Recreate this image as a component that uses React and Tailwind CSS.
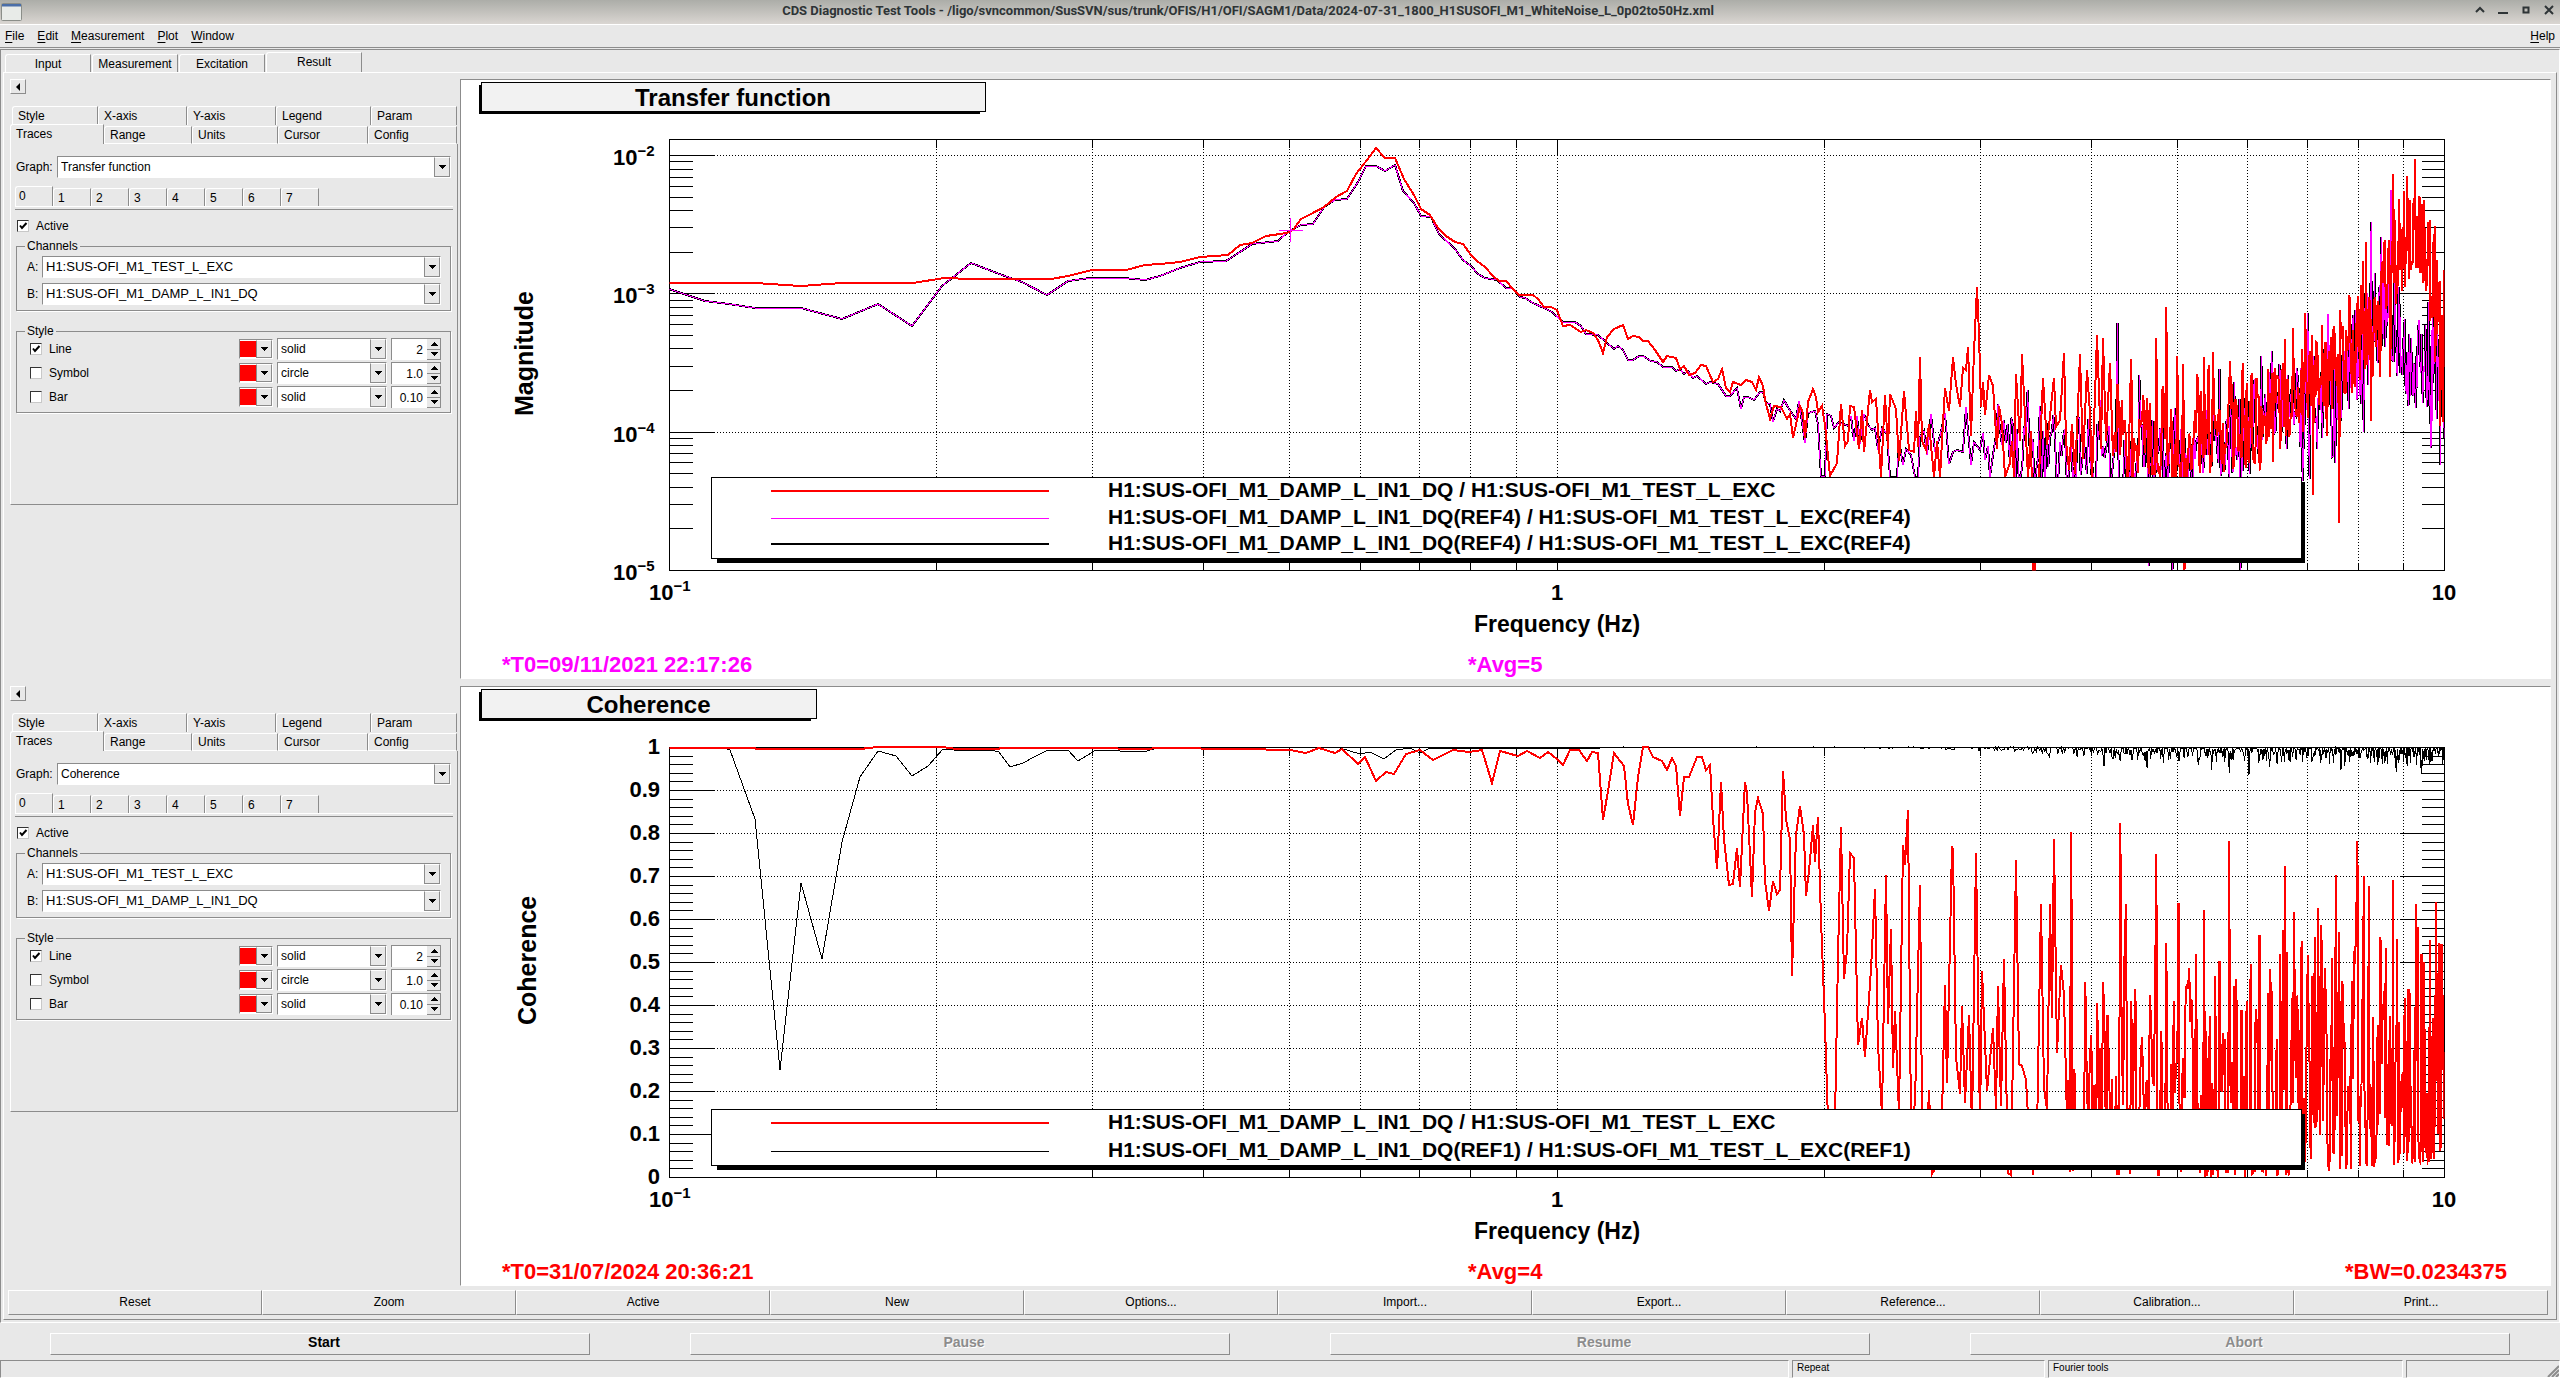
import React from 'react'
import { useState } from 'react';

// plot geometry, in canvas units
const LEFT = 669.5;
const DECADE = 887.5;
const RIGHT = LEFT + DECADE * 2;

const freqX = (f) => LEFT + DECADE * Math.log10(f / 0.1);

const parse = (s) => s.trim().split(/\s+/).map((p) => p.split(',').map(Number));

const random = (seed) => () => {
  seed = (seed + 0x6d2b79f5) | 0;
  let t = Math.imul(seed ^ (seed >>> 15), 1 | seed);
  t = (t + Math.imul(t ^ (t >>> 7), 61 | t)) ^ t;
  return ((t ^ (t >>> 14)) >>> 0) / 4294967296;
};

// fills the noisy end of a trace bin by bin, between a top and a bottom level
const noise = (from, bins, levels, shape, peaks, seed) => {
  const rnd = random(seed);
  const env = parse(levels.replace(/\//g, ','));
  const out = [];
  for (let k = 1; k <= 10 * bins; k++) {
    const x = freqX(k / bins);
    if (x <= from) continue;
    let i = env.findIndex((e) => e[0] >= x);
    if (i < 0) i = env.length - 1;
    const b = env[i];
    const a = env[Math.max(0, i - 1)];
    const t = b[0] === a[0] ? 0 : Math.min(1, (x - a[0]) / (b[0] - a[0]));
    const top = a[1] + (b[1] - a[1]) * t;
    const bottom = a[2] + (b[2] - a[2]) * t;
    out.push([x, top + (bottom - top) * shape(rnd)]);
  }
  parse(peaks).forEach(([px, py]) => {
    let best = 0;
    out.forEach((p, i) => {
      if (Math.abs(p[0] - px) < Math.abs(out[best][0] - px)) best = i;
    });
    out[best] = [out[best][0], py];
  });
  return out;
};

const points = (list) => list.map((p) => p[0].toFixed(1) + ',' + p[1].toFixed(1)).join(' ');

const wide = (r) => r() + (r() < 0.1 ? r() * 0.5 : 0);
const low = (r) => 1 - Math.pow(r(), 1.9);
const high = (r) => Math.pow(r(), 2.6);

const transferRed = points([
  ...parse(`669,283 755,283 801,286 842,283 913,283 944,278 971,279 1051,279 1068,276 1092,270 1126,270 1145,265 1160,264 1180,262
  1200,257 1228,255 1240,245 1252,243 1266,236 1287,233 1293,230 1301,219 1311,214 1324,207 1336,197 1347,191 1356,174 1367,160
  1376,148 1385,158 1395,158 1404,179 1414,195 1421,209 1430,215 1438,228 1446,236 1455,242 1463,244 1471,255 1477,261 1485,267
  1493,276 1499,281 1506,281 1513,289 1519,295 1533,295 1538,299 1544,307 1551,307 1557,310 1563,326 1570,325 1581,332 1586,330
  1593,333 1598,340 1603,353 1607,337 1614,329 1623,325 1628,339 1633,336 1639,337 1643,341 1648,341 1655,350 1663,362 1667,356
  1676,358 1680,369 1684,366 1689,375 1695,373 1701,365 1706,366 1713,382 1718,379 1722,369 1726,388 1730,392 1733,382 1741,385
  1746,380 1752,382 1756,390 1759,377 1763,386 1765,400 1770,419 1774,406 1781,407 1787,419 1790,414 1793,438 1797,420 1800,406
  1803,413 1805,438 1808,402 1813,389 1816,397 1818,412 1822,406 1825,425 1830,476 1837,463 1841,404 1845,446 1848,441 1850,406
  1854,407 1859,449 1862,410 1864,452 1870,390 1872,402 1876,399 1881,477 1885,395 1888,449 1890,394 1896,409 1899,461 1904,391
  1909,450 1914,452 1916,411 1918,447 1920,357 1922,441 1926,450 1929,424 1934,477 1937,441 1940,477 1945,388 1949,411 1953,357
  1956,384 1960,407 1963,368 1966,370 1968,347 1971,436 1974,352 1977,287 1979,334 1981,407 1983,382 1985,415 1989,375 1993,386
  1997,449 1999,406 2002,424 2005,477 2010,463 2012,441 2014,477 2016,374 2020,441 2022,354 2025,416 2028,477 2031,431 2033,570
  2035,570 2039,477 2043,378 2047,445 2051,406 2054,378 2056,427 2060,420 2064,353 2066,441 2069,470 2072,424 2075,474 2078,406
  2080,354 2083,459 2087,370 2090,413 2092,477 2095,395 2097,335 2101,449 2103,338 2106,441 2110,363 2113,456`),
  ...noise(2114, 64, '2114/385/480 2200/385/485 2240/375/475 2270/365/465 2290/350/450 2310/335/430 2340/325/400 2360/285/390 2375/260/350 2390/220/320 2405/195/290 2418/190/270 2430/220/320 2438/250/370 2445/290/430', wide,
    `2117,384 2131,359 2143,395 2156,338 2166,307 2177,356 2183,364 2185,570 2197,374 2204,357 2209,365 2213,352 2230,361 2243,363 2252,373
    2285,339 2293,328 2305,313 2313,495 2322,325 2339,523 2340,310 2349,295 2363,261 2366,242 2371,421 2380,377 2390,377 2393,174
    2399,199 2404,191 2407,176 2415,159 2424,200 2435,226 2440,426 2443,422 2444,270`, 7),
]);

const transferRef = points([
  ...parse(`669,289 705,301 729,304 755,308 801,308 842,319 878,304 912,326 942,286 971,263 1002,275 1022,282 1047,295 1068,281
  1090,278 1124,278 1145,280 1160,276 1180,268 1200,262 1226,261 1240,252 1252,244 1278,241 1289,231 1301,225 1313,224 1324,207
  1335,200 1347,199 1358,182 1366,166 1376,166 1385,171 1395,165 1403,191 1414,203 1421,216 1431,217 1439,234 1455,249 1463,260
  1471,266 1478,274 1485,278 1497,280 1506,288 1512,288 1520,297 1525,298 1533,303 1544,308 1552,312 1563,322 1575,322 1581,326
  1586,334 1598,335 1614,349 1618,346 1623,350 1628,360 1633,360 1639,356 1643,356 1651,361 1657,362 1663,367 1672,367 1676,371
  1680,369 1684,374 1688,371 1693,378 1697,376 1706,384 1710,382 1718,384 1726,396 1730,396 1737,388 1741,409 1744,397 1748,397
  1754,400 1760,392 1763,392 1766,403 1770,404 1773,422 1777,409 1780,411 1784,400 1789,409 1796,419 1799,401 1805,443 1808,413
  1815,411 1818,424 1821,476 1825,476 1827,414 1831,416 1834,428 1839,422 1848,426 1851,416 1854,441 1857,416 1860,444 1864,414
  1868,425 1872,430 1875,428 1878,450 1882,428 1887,434 1890,477 1897,477 1899,440 1903,465 1906,449 1911,455 1915,477 1918,477
  1920,437 1924,431 1927,455 1931,414 1935,452 1940,436 1945,413 1949,464 1953,452 1957,450 1963,452 1966,407 1971,465 1974,442
  1980,450 1983,433 1985,460 1988,446 1990,477 1993,455 1996,435`),
  ...noise(1998, 64, '1998/410/480 2030/410/500 2110/420/510 2170/400/510 2220/390/490 2260/375/460 2300/350/450 2340/335/430 2370/285/400 2385/260/340 2395/270/370 2405/310/400 2430/300/420 2445/320/440', wide,
    `1998,404 2003,420 2027,390 2040,406 2053,415 2100,400 2118,323 2140,375 2148,566 2172,570 2219,369 2234,382 2241,570 2261,356 2272,351 2279,364
    2303,481 2308,313 2310,479 2328,314 2332,457 2335,463 2364,432 2371,222 2375,273 2381,237 2391,190 2393,356 2408,399 2415,397
    2422,384 2428,394 2440,465`, 21),
]);

const coherenceRed = points([
  ...parse(`669,748 755,748 756,749 860,749 878,747 942,747 957,749 999,749 1000,748 1117,748 1119,749 1144,749 1160,748 1240,749
  1290,750 1306,753 1319,748 1335,753 1342,749 1358,764 1365,757 1376,781 1386,772 1394,774 1406,754 1420,750 1433,760 1453,750
  1469,752 1482,750 1492,783 1500,751 1518,756 1527,751 1540,758 1548,752 1557,759 1563,765 1570,750 1579,750 1587,761 1592,752
  1598,753 1603,820 1608,791 1614,753 1624,766 1628,804 1633,825 1638,777 1643,747 1648,747 1653,757 1662,761 1667,770 1672,758
  1676,766 1680,816 1684,777 1689,777 1697,757 1702,757 1706,770 1710,765 1713,819 1717,869 1721,782 1724,839 1729,885 1733,884
  1737,848 1740,887 1745,782 1747,793 1752,897 1755,812 1758,798 1763,814 1765,881 1769,911 1773,881 1777,894 1780,890 1783,771
  1786,819 1790,839 1792,976 1796,835 1800,806 1804,835 1806,896 1809,871 1813,825 1815,862 1818,817 1821,919 1825,1026 1828,1120
  1835,1120 1838,957 1841,827 1844,979 1847,950 1850,853 1854,858 1858,1045 1862,1018 1865,1057 1871,969 1875,889 1878,1045
  1882,1114 1886,875 1888,1024 1891,929 1893,1068 1895,1011 1899,1114 1903,845 1905,865 1908,810 1911,1126 1915,1103 1920,885
  1922,1110 1927,1141 1929,1090 1932,1174 1941,1160 1945,985 1947,1083 1952,846 1953,850 1956,1057 1960,1094 1962,1006 1965,1103
  1969,1015 1972,1126 1976,853 1980,1126 1982,971 1987,1091 1993,1028 1996,1110 1998,986 2001,1106 2004,959 2008,1173 2011,1175
  2016,860 2019,1064 2022,1066 2026,1080 2029,1133 2033,1175 2037,1133 2041,904 2044,1087 2047,1110 2050,904 2052,1018 2054,839
  2057,1053 2061,965 2064,995 2067,1120`),
  ...noise(2068, 64, '2068/1000/1172 2200/980/1178 2300/940/1175 2445/930/1160', low,
    `2071,832 2085,982 2098,1003 2103,982 2120,823 2124,956 2126,904 2131,1001 2136,989 2151,1027 2156,854 2166,943 2179,903 2189,968
    2196,954 2204,910 2219,961 2229,841 2242,1010 2247,1001 2259,935 2268,993 2283,930 2285,866 2294,912 2302,941 2308,955 2315,937
    2318,908 2321,925 2336,875 2339,932 2354,951 2357,841 2358,873 2364,876 2369,886 2373,1017 2385,983 2393,880 2397,939 2416,904
    2418,927 2424,962 2430,940 2436,902 2439,943`, 3),
]);

const coherenceRef = points([
  ...parse(`669,748 725,748 730,750 755,819 780,1070 801,883 822,959 842,842 860,777 878,751 896,756 912,776 928,766 943,749 964,751
  991,750 999,752 1010,767 1023,763 1034,757 1046,751 1068,750 1078,761 1096,750 1143,752 1154,749 1240,748 1340,748 1360,754
  1370,752 1384,759 1396,750 1410,748 1420,753 1430,748 1600,748`),
  ...noise(1600, 90, '1600/747/748 1850/747/748 1950/747/750 2060/747/755 2120/748/762 2445/748/766', high,
    '2050,757 2104,766 2147,768 2163,763 2198,765 2212,770 2229,773 2249,775 2270,767 2320,763 2341,770 2345,766 2396,772 2421,774', 11),
]);

const tickFreqs = [0.2, 0.3, 0.4, 0.5, 0.6, 0.7, 0.8, 0.9, 1, 2, 3, 4, 5, 6, 7, 8, 9];

const Power = ({ x, y, exp }) => (
  <text x={x} y={y} fontSize="22">10<tspan fontSize="15" dy="-9">−{exp}</tspan></text>
);

const XAxis = ({ top, bottom }) => (
  <>
    {tickFreqs.map((f) => {
      const x = Math.floor(freqX(f)) + 0.5;
      const len = f === 1 ? 16 : 8;
      return (
        <g key={f} stroke="black">
          <line x1={x} x2={x} y1={top} y2={bottom} strokeDasharray="1 2" />
          <line x1={x} x2={x} y1={top} y2={top + len} />
          <line x1={x} x2={x} y1={bottom} y2={bottom - len} />
        </g>
      );
    })}
    <rect x={LEFT} y={top} width={RIGHT - LEFT} height={bottom - top} fill="none" stroke="black" />
    <Power x={649} y={bottom + 29} exp={1} />
    <text x={1557} y={bottom + 29} fontSize="22" textAnchor="middle">1</text>
    <text x={2444} y={bottom + 29} fontSize="22" textAnchor="middle">10</text>
    <text x={1474} y={bottom + 61} fontSize="23">Frequency (Hz)</text>
  </>
);

const YTick = ({ y, major }) => {
  const len = major ? 44 : 23;
  return (
    <g stroke="black">
      <line x1={LEFT} x2={LEFT + len} y1={y} y2={y} />
      <line x1={RIGHT - len} x2={RIGHT} y1={y} y2={y} />
      {major && <line x1={LEFT + len} x2={RIGHT - len} y1={y} y2={y} strokeDasharray="1 2" />}
    </g>
  );
};

const TitleBox = ({ y, width, children }) => (
  <>
    <rect x="479" y={y + 3} width={width - 3} height="29" />
    <rect x="481.5" y={y + 0.5} width={width} height="29" fill="#f2f2f2" stroke="black" />
    <text x={481 + width / 2} y={y + 24} fontSize="24" textAnchor="middle">{children}</text>
  </>
);

const PlotLegend = ({ y, height, items }) => (
  <>
    <rect x="717" y={y + 5} width="1588" height={height} />
    <rect x="711.5" y={y + 0.5} width="1590" height={height} fill="white" stroke="black" />
    {items.map((it) => (
      <g key={it.y}>
        <line x1="771" x2="1049" y1={it.y} y2={it.y} stroke={it.color} strokeWidth={it.width} />
        <text x="1108" y={it.base} fontSize="21">{it.label}</text>
      </g>
    ))}
  </>
);

const Canvas = ({ view, label, children }) => (
  <svg viewBox={view} role="img" aria-label={label} className="block w-full bg-white font-['Liberation_Sans',sans-serif] font-bold" shapeRendering="crispEdges">
    {children}
  </svg>
);

const TransferPlot = () => {
  const top = 139.5;
  const bottom = 570.5;
  const ticks = [];
  for (let d = -5; d < -1; d++) {
    for (let m = 1; m < 10; m++) {
      const y = bottom - 138.3 * (d + 5 + Math.log10(m));
      if (y > top + 2 && y < bottom - 1) ticks.push({ y: Math.floor(y) + 0.5, major: m === 1 });
    }
  }
  return (
    <Canvas view="461 80 2089 598" label="Transfer function">
      <clipPath id="transfer-clip"><rect x={LEFT} y={top} width={RIGHT - LEFT} height={bottom - top} /></clipPath>
      <TitleBox y={82} width={504}>Transfer function</TitleBox>
      {ticks.map((t) => <YTick key={t.y} {...t} />)}
      <XAxis top={top} bottom={bottom} />
      <Power x={613} y={165} exp={2} />
      <Power x={613} y={303} exp={3} />
      <Power x={613} y={442} exp={4} />
      <Power x={613} y={580} exp={5} />
      <text transform="translate(533 416) rotate(-90)" fontSize="25">Magnitude</text>
      <g clipPath="url(#transfer-clip)" fill="none">
        <polyline points={transferRef} stroke="black" strokeWidth="2" />
        <polyline points={transferRef} stroke="#ff00ff" strokeWidth="1" />
        <polyline points={transferRed} stroke="red" strokeWidth="2" />
      </g>
      <path d="M1278.5 230.5h24M1290.5 218v24" stroke="#ff00ff" fill="none" />
      <PlotLegend y={477} height={81} items={[
        { y: 491, base: 497, color: 'red', width: 2, label: 'H1:SUS-OFI_M1_DAMP_L_IN1_DQ / H1:SUS-OFI_M1_TEST_L_EXC' },
        { y: 518.5, base: 524, color: '#ff00ff', width: 1, label: 'H1:SUS-OFI_M1_DAMP_L_IN1_DQ(REF4) / H1:SUS-OFI_M1_TEST_L_EXC(REF4)' },
        { y: 544, base: 550, color: 'black', width: 2, label: 'H1:SUS-OFI_M1_DAMP_L_IN1_DQ(REF4) / H1:SUS-OFI_M1_TEST_L_EXC(REF4)' },
      ]} />
      <g fill="#ff00ff" fontSize="22">
        <text x="502" y="672">*T0=09/11/2021 22:17:26</text>
        <text x="1468" y="672">*Avg=5</text>
      </g>
    </Canvas>
  );
};

const CoherencePlot = () => {
  const top = 747.5;
  const bottom = 1177.5;
  const ticks = [];
  for (let i = 1; i < 50; i++) {
    ticks.push({ y: Math.floor(top + i * 8.6) + 0.5, major: i % 5 === 0 });
  }
  return (
    <Canvas view="461 687 2089 598" label="Coherence">
      <clipPath id="coherence-clip"><rect x={LEFT} y={top - 2} width={RIGHT - LEFT} height={bottom - top + 4} /></clipPath>
      <TitleBox y={689} width={335}>Coherence</TitleBox>
      {ticks.map((t) => <YTick key={t.y} {...t} />)}
      <XAxis top={top} bottom={bottom} />
      {['1', '0.9', '0.8', '0.7', '0.6', '0.5', '0.4', '0.3', '0.2', '0.1', '0'].map((v, i) => (
        <text key={v} x="660" y={754 + i * 43} fontSize="22" textAnchor="end">{v}</text>
      ))}
      <text transform="translate(536 1025) rotate(-90)" fontSize="25">Coherence</text>
      <g clipPath="url(#coherence-clip)" fill="none">
        <polyline points={coherenceRef} stroke="black" strokeWidth="1" />
        <polyline points={coherenceRed} stroke="red" strokeWidth="2" />
      </g>
      <PlotLegend y={1109} height={56} items={[
        { y: 1123, base: 1129, color: 'red', width: 2, label: 'H1:SUS-OFI_M1_DAMP_L_IN1_DQ / H1:SUS-OFI_M1_TEST_L_EXC' },
        { y: 1151.5, base: 1157, color: 'black', width: 1, label: 'H1:SUS-OFI_M1_DAMP_L_IN1_DQ(REF1) / H1:SUS-OFI_M1_TEST_L_EXC(REF1)' },
      ]} />
      <g fill="red" fontSize="22">
        <text x="502" y="1279">*T0=31/07/2024 20:36:21</text>
        <text x="1468" y="1279">*Avg=4</text>
        <text x="2345" y="1279">*BW=0.0234375</text>
      </g>
    </Canvas>
  );
};

const Arrow = ({ up }) => (
  <svg viewBox="0 0 8 4" className="h-1 w-2" shapeRendering="crispEdges" aria-hidden="true">
    <path d={up ? 'M0 4h8L4 0z' : 'M0 0h8L4 4z'} />
  </svg>
);

const ArrowBox = () => (
  <span className="pointer-events-none absolute top-0 right-0 bottom-0 flex w-4 items-center justify-center border border-[#8c8c8c] border-t-white border-l-[#8c8c8c] bg-[#e8e8e8]">
    <Arrow />
  </span>
);

const Select = ({ id, label, value, className, size = 'text-xs' }) => (
  <span className={`relative block border border-[#8c8c8c] border-r-white border-b-white bg-white ${className}`}>
    <select id={id} aria-label={label} defaultValue={value} className={`block h-full w-full appearance-none bg-white pr-4 pl-[3px] outline-none ${size}`}>
      <option>{value}</option>
    </select>
    <ArrowBox />
  </span>
);

const CheckBox = ({ id, label, checked }) => (
  <label htmlFor={id} className="flex items-center gap-[7px]">
    <span className="relative block h-3 w-3">
      <input id={id} type="checkbox" defaultChecked={checked} className="peer block h-3 w-3 appearance-none border border-[#333] border-r-[#c8c8c8] border-b-[#c8c8c8] bg-white" />
      <svg viewBox="0 0 12 12" className="pointer-events-none absolute inset-0 hidden h-3 w-3 peer-checked:block" aria-hidden="true">
        <path d="M3 5.500 5 8 9.500 3" fill="none" stroke="black" strokeWidth="2" />
      </svg>
    </span>
    {label}
  </label>
);

const StyleRow = ({ id, label, checked, kind, amount }) => (
  <div className="flex h-6 items-center">
    <div className="flex-1"><CheckBox id={id} label={label} checked={checked} /></div>
    <button type="button" aria-label={`${label} color`} className="relative h-5 w-[34px] border border-[#8c8c8c] border-r-white border-b-white bg-white">
      <span className="block h-4 w-4 bg-[#ff0000]" />
      <ArrowBox />
    </button>
    <Select label={`${label} type`} value={kind} className="ml-1 h-[22px] w-[110px]" />
    <span className="ml-1 flex h-[22px] w-[50px] border-t border-l border-[#8c8c8c] bg-white">
      <input aria-label={`${label} size`} defaultValue={amount} className="w-[35px] min-w-0 bg-white pr-1 text-right text-xs outline-none" />
      <span className="flex flex-1 flex-col bg-[#e8e8e8]">
        <button type="button" aria-label={`${label} size up`} className="flex flex-1 items-center justify-center border-r border-b border-[#8c8c8c]"><Arrow up /></button>
        <button type="button" aria-label={`${label} size down`} className="flex flex-1 items-center justify-center border-r border-b border-[#8c8c8c]"><Arrow /></button>
      </span>
    </span>
  </div>
);

const tabBase = 'rounded-tl-[3px] border-t border-l border-r border-t-white border-l-white border-r-[#8c8c8c] bg-[#e8e8e8] text-left text-xs leading-4';

const SidePanel = ({ id, graph }) => {
  const [trace, setTrace] = useState(0);
  return (
    <div className="w-[456px] shrink-0 pr-[2px] pl-[6px] text-xs">
      <button type="button" aria-label="Collapse" className="flex h-[15px] w-4 items-center justify-center border border-white border-r-[#8c8c8c] border-b-[#8c8c8c]">
        <svg viewBox="0 0 4 8" className="h-2 w-1" aria-hidden="true"><path d="M4 0v8L0 4z" /></svg>
      </button>
      <div className="mt-3 grid grid-cols-[86fr_89fr_89fr_95fr_86fr] pr-px pl-[2px]">
        {['Style', 'X-axis', 'Y-axis', 'Legend', 'Param'].map((t) => (
          <button key={t} type="button" className={`${tabBase} h-[19px] pl-[5px]`}>{t}</button>
        ))}
      </div>
      <div className="-mt-px grid grid-cols-[94fr_88fr_86fr_90fr_89fr] items-end pr-px">
        {['Traces', 'Range', 'Units', 'Cursor', 'Config'].map((t, i) => (
          <button key={t} type="button" className={`${tabBase} pl-[5px] ${i === 0 ? 'h-5 pb-[2px]' : 'h-[18px] border-b border-b-white'}`}>{t}</button>
        ))}
      </div>
      <div className="h-[361px] border-r border-b border-l border-r-[#8c8c8c] border-b-[#8c8c8c] border-l-white px-[5px] pt-3">
        <div className="flex items-center">
          <label htmlFor={`${id}-graph`} className="w-[41px]">Graph:</label>
          <Select id={`${id}-graph`} value={graph} className="mr-px h-[22px] flex-1" />
        </div>
        <div className="-mx-px mt-2 border-b border-[#8c8c8c] pb-[2px]">
          <div className="flex h-[21px] items-end border-b border-white">
            {[0, 1, 2, 3, 4, 5, 6, 7].map((n) => (
              <button key={n} type="button" onClick={() => setTrace(n)} className={`${tabBase} w-[38px] ${n === trace ? 'h-5 pb-[2px] pl-[3px]' : 'h-[18px] pl-1'}`}>{n}</button>
            ))}
          </div>
        </div>
        <div className="mt-2 h-4 pl-px">
          <CheckBox id={`${id}-active`} label="Active" checked />
        </div>
        <fieldset className="mt-1 mr-px h-[73px] border border-[#8c8c8c] pr-[9px] pl-2 shadow-[1px_1px_0_white]">
          <legend className="px-[2px] leading-4">Channels</legend>
          <div className="mt-[2px] flex items-center pl-[2px]">
            <label htmlFor={`${id}-a`} className="w-[15px]">A:</label>
            <Select id={`${id}-a`} value="H1:SUS-OFI_M1_TEST_L_EXC" size="text-[13px]" className="h-[22px] flex-1" />
          </div>
          <div className="mt-[5px] flex items-center pl-[2px]">
            <label htmlFor={`${id}-b`} className="w-[15px]">B:</label>
            <Select id={`${id}-b`} value="H1:SUS-OFI_M1_DAMP_L_IN1_DQ" size="text-[13px]" className="h-[22px] flex-1" />
          </div>
        </fieldset>
        <fieldset className="mt-3 mr-px h-[90px] border border-[#8c8c8c] pr-[9px] pl-2 shadow-[1px_1px_0_white]">
          <legend className="px-[2px] leading-4">Style</legend>
          <div className="-mt-[2px] pl-[5px]">
            <StyleRow id={`${id}-line`} label="Line" checked kind="solid" amount="2" />
            <StyleRow id={`${id}-symbol`} label="Symbol" kind="circle" amount="1.0" />
            <StyleRow id={`${id}-bar`} label="Bar" kind="solid" amount="0.10" />
          </div>
        </fieldset>
      </div>
    </div>
  );
};

const PlotRow = ({ id, graph, children }) => (
  <div className="flex">
    <SidePanel id={id} graph={graph} />
    <div className="min-w-0 flex-1 border-t border-r border-b border-l border-t-[#8c8c8c] border-r-white border-b-white border-l-[#8c8c8c]">
      {children}
    </div>
  </div>
);

const TitleBar = () => (
  <header className="flex h-6 items-center bg-linear-to-b from-[#acada8] to-[#dad6d2] px-px">
    <svg viewBox="0 0 21 18" className="h-[18px] w-[21px]" aria-hidden="true">
      <rect x="0.500" y="0.500" width="20" height="17" rx="1" fill="#e8ebe8" stroke="#8b8e89" />
      <rect x="1" y="1" width="19" height="2.500" fill="#4a6ea8" />
    </svg>
    <h1 className="flex-1 pb-[3px] text-center font-[Roboto,sans-serif] text-[13px] font-bold text-[#2e3436]">
      CDS Diagnostic Test Tools - /ligo/svncommon/SusSVN/sus/trunk/OFIS/H1/OFI/SAGM1/Data/2024-07-31_1800_H1SUSOFI_M1_WhiteNoise_L_0p02to50Hz.xml
    </h1>
    <div className="flex gap-[11px] pr-1 pb-1">
      {[
        ['Shade', 'M2 8 6 4 10 8'],
        ['Minimize', 'M1 9H11'],
        ['Maximize', 'M3.500 3.500H8.500V8.500H3.500Z'],
        ['Close', 'M2 2 10 10M10 2 2 10'],
      ].map(([name, d]) => (
        <button key={name} type="button" aria-label={name}>
          <svg viewBox="0 0 12 12" className="h-3 w-3" aria-hidden="true"><path d={d} fill="none" stroke="#2e3436" strokeWidth="2" /></svg>
        </button>
      ))}
    </div>
  </header>
);

const MenuItem = ({ name }) => (
  <a href="#" className="leading-4"><span className="underline underline-offset-2">{name[0]}</span>{name.slice(1)}</a>
);

const App = () => {
  return (
    <div className="flex min-h-screen flex-col bg-[#e8e8e8] font-['Liberation_Sans',sans-serif] text-xs text-black">
      <TitleBar />
      <nav className="flex h-6 items-center gap-[13px] border-t border-b border-t-white border-b-[#8c8c8c] px-[5px]">
        {['File', 'Edit', 'Measurement', 'Plot', 'Window'].map((n) => <MenuItem key={n} name={n} />)}
        <span className="flex-1" />
        <MenuItem name="Help" />
      </nav>
      <main className="mt-px border border-t-[#8c8c8c] border-r-white border-b-white border-l-[#8c8c8c] px-[2px] pt-[2px] pb-[2px]">
        <div className="flex h-5 items-end pl-[2px]">
          {['Input', 'Measurement', 'Excitation'].map((n) => (
            <button key={n} type="button" className="mr-px h-[18px] w-[86px] rounded-tl-[3px] border-t border-r border-l border-t-white border-r-[#8c8c8c] border-l-white text-center leading-4">{n}</button>
          ))}
          <button type="button" className="h-5 w-24 rounded-tl-[3px] border-t border-r border-l border-t-white border-r-[#8c8c8c] border-l-white pb-[2px] text-center leading-4">Result</button>
        </div>
        <div className="border border-white border-r-[#8c8c8c] border-b-[#8c8c8c] pt-[6px] pr-[5px] pb-1">
          <div className="flex flex-col gap-[7px]">
            <PlotRow id="top" graph="Transfer function"><TransferPlot /></PlotRow>
            <PlotRow id="bottom" graph="Coherence"><CoherencePlot /></PlotRow>
          </div>
          <div className="mt-1 mr-[3px] ml-1 grid grid-cols-10">
            {['Reset', 'Zoom', 'Active', 'New', 'Options...', 'Import...', 'Export...', 'Reference...', 'Calibration...', 'Print...'].map((n) => (
              <button key={n} type="button" className="h-[25px] border border-white border-r-[#8c8c8c] border-b-[#8c8c8c] pb-px text-xs">{n}</button>
            ))}
          </div>
        </div>
      </main>
      <div className="grid grid-cols-4 pt-[10px]">
        {['Start', 'Pause', 'Resume', 'Abort'].map((n, i) => (
          <div key={n} className="px-[50px]">
            <button type="button" disabled={i > 0} className="block h-[22px] w-full border border-white border-r-[#8c8c8c] border-b-[#8c8c8c] pb-1 pl-2 text-sm leading-4 font-bold disabled:text-[#8c8c8c] disabled:text-shadow-[1px_1px_0_white]">{n}</button>
          </div>
        ))}
      </div>
      <footer className="mt-[5px] flex flex-1 gap-[3px] overflow-hidden text-[10px] leading-[14px]">
        <div className="w-[calc(70%-3px)] border border-[#8c8c8c] border-r-white border-b-white" />
        <div className="w-[calc(10%-3px)] border border-[#8c8c8c] border-r-white border-b-white pl-1">Repeat</div>
        <div className="w-[calc(14%-3px)] border border-[#8c8c8c] border-r-white border-b-white pl-1">Fourier tools</div>
        <div className="flex flex-1 items-end justify-end border border-[#8c8c8c] border-r-white border-b-white">
          <svg viewBox="0 0 12 12" className="h-3 w-3" aria-hidden="true"><path d="M1 12 12 1M5 12 12 5M9 12 12 9" stroke="#8c8c8c" strokeWidth="2" /></svg>
        </div>
      </footer>
    </div>
  );
};

export default App
